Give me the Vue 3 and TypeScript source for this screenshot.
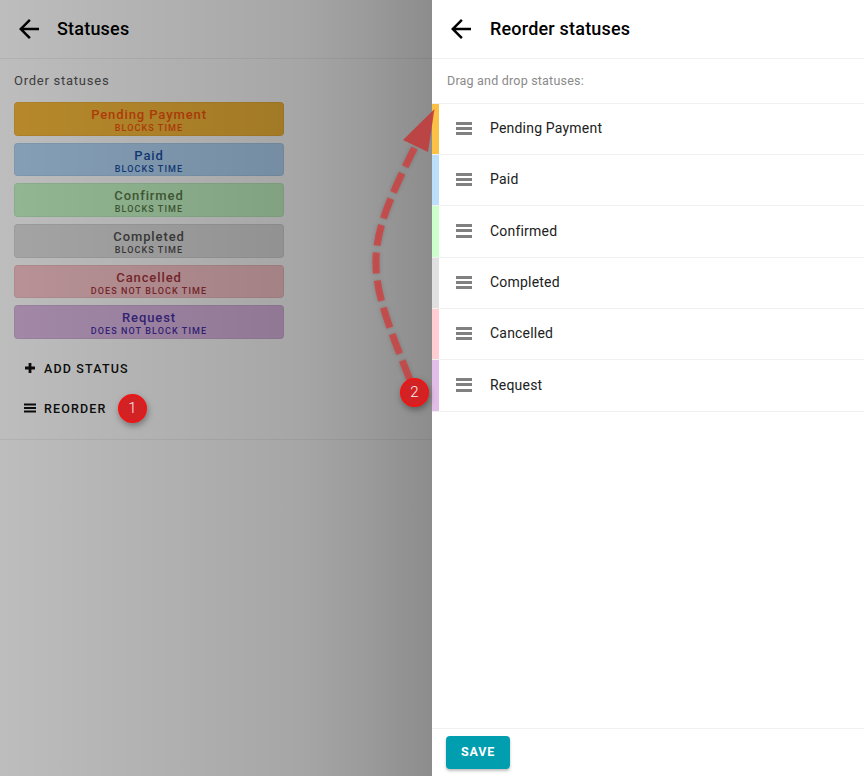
<script setup lang="ts">
interface Status { name: string; note: string; bg: string; fg: string; strip: string }
const statuses: Status[] = [
  { name: 'Pending Payment', note: 'BLOCKS TIME', bg: '#f7b93a', fg: '#f4540c', strip: '#fbc146' },
  { name: 'Paid', note: 'BLOCKS TIME', bg: '#b3d7f7', fg: '#1a50a5', strip: '#bbdefb' },
  { name: 'Confirmed', note: 'BLOCKS TIME', bg: '#c5f7c5', fg: '#587a48', strip: '#ccffcc' },
  { name: 'Completed', note: 'BLOCKS TIME', bg: '#dedede', fg: '#505050', strip: '#e0e0e0' },
  { name: 'Cancelled', note: 'DOES NOT BLOCK TIME', bg: '#f9c5ca', fg: '#a5343c', strip: '#ffcdd2' },
  { name: 'Request', note: 'DOES NOT BLOCK TIME', bg: '#dcb8e3', fg: '#4a30a5', strip: '#e1bee7' },
]
</script>

<template>
  <div class="screen">
    <section class="page">
      <header class="bar">
        <svg class="back" viewBox="0 0 24 24"><path d="M20 11H7.83l5.59-5.59L12 4l-8 8 8 8 1.41-1.41L7.83 13H20z" /></svg>
        <h1>Statuses</h1>
      </header>
      <div class="content">
        <p class="label">Order statuses</p>
        <ul class="chips">
          <li v-for="s in statuses" :key="s.name" class="chip" :style="{ background: s.bg, color: s.fg }">
            <span class="chip-name">{{ s.name }}</span>
            <span class="chip-note">{{ s.note }}</span>
          </li>
        </ul>
        <div class="action">
          <svg viewBox="0 0 12 12"><path d="M4.6 1h2.8v3.6H11v2.8H7.4V11H4.6V7.4H1V4.6h3.6z" /></svg>
          <span>ADD STATUS</span>
        </div>
        <div class="action">
          <svg viewBox="0 0 12 12"><path d="M0 1.6h12v1.9H0zM0 5.05h12v1.9H0zM0 8.5h12v1.9H0z" /></svg>
          <span>REORDER</span>
        </div>
      </div>
    </section>

    <div class="scrim"></div>

    <aside class="panel">
      <header class="bar">
        <svg class="back" viewBox="0 0 24 24"><path d="M20 11H7.83l5.59-5.59L12 4l-8 8 8 8 1.41-1.41L7.83 13H20z" /></svg>
        <h1 class="panel-title">Reorder statuses</h1>
      </header>
      <p class="hint">Drag and drop statuses:</p>
      <ul class="rows">
        <li v-for="s in statuses" :key="s.name" class="row">
          <i class="strip" :style="{ background: s.strip }"></i>
          <span class="handle"><b></b><b></b><b></b></span>
          <span class="row-name">{{ s.name }}</span>
        </li>
      </ul>
      <footer class="foot">
        <button class="save" type="button">SAVE</button>
      </footer>
    </aside>

    <svg class="arrow" width="864" height="776" viewBox="0 0 864 776">
      <path class="shaft" d="M410 380 C366 270 361.5 253 415 147" />
      <polygon points="434.5,109 403,140 428,152" fill="#c03c3c" fill-opacity=".9" />
    </svg>
    <span class="badge badge-one">1</span>
    <span class="badge badge-two">2</span>
  </div>
</template>

<style>
html, body { margin: 0; background: #fff; }
</style>

<style scoped>
.screen {
  position: relative;
  width: 864px;
  height: 776px;
  overflow: hidden;
  font-family: Roboto, "Liberation Sans", sans-serif;
  background: #fff;
}
.page { width: 432px; }
.bar {
  display: flex;
  align-items: center;
  height: 58px;
  padding-left: 14px;
  border-bottom: 1px solid #f0f0f0;
}
.back { width: 30px; height: 30px; margin-right: 13px; flex: none; }
.back path { fill: #000; }
h1 { margin: 0 0 2px; font-size: 18px; font-weight: 500; color: #000; letter-spacing: .2px; }
.panel-title { margin-left: 1px; }
.content {
  padding: 14px 148px 0 14px;
  height: 381px;
  box-sizing: border-box;
  border-bottom: 1px solid #f0f0f0;
}
.label { margin: 0 0 13px; font-size: 13px; line-height: 16px; letter-spacing: .75px; color: #555; }
.chips { list-style: none; margin: 0; padding: 0; display: flex; flex-direction: column; gap: 7px; }
.chip {
  height: 33.7px;
  box-sizing: border-box;
  border-radius: 4px;
  border: 1px solid rgba(0, 0, 0, .05);
  display: flex;
  flex-direction: column;
  align-items: center;
  padding-top: 4px;
}
.chip-name { font-size: 13px; line-height: 15px; font-weight: 500; letter-spacing: .9px; }
.chip-note { font-size: 9px; line-height: 12px; font-weight: 500; letter-spacing: 1.08px; }
.action {
  display: flex;
  align-items: center;
  gap: 8px;
  height: 40px;
  padding-left: 10px;
  font-size: 12.5px;
  font-weight: 500;
  letter-spacing: 1.15px;
  color: #111;
}
.chips + .action { margin-top: 9px; }
.action svg { width: 12px; height: 12px; fill: #111; }
.scrim {
  position: absolute;
  inset: 0;
  background: linear-gradient(90deg, rgba(0, 0, 0, .26) 0, rgba(0, 0, 0, .35) 300px, rgba(0, 0, 0, .39) 360px, rgba(0, 0, 0, .45) 432px);
}
.panel {
  position: absolute;
  top: 0;
  right: 0;
  bottom: 0;
  width: 432px;
  display: flex;
  flex-direction: column;
  background: #fff;
}
.hint {
  margin: 0;
  height: 44.6px;
  box-sizing: border-box;
  padding: 14px 0 0 15px;
  font-size: 12.5px;
  line-height: 16px;
  letter-spacing: .2px;
  color: #8a8a8a;
  border-bottom: 1px solid #f0f0f0;
}
.rows { list-style: none; margin: 0; padding: 0; flex: 1; }
.row {
  display: flex;
  align-items: center;
  height: 51.33px;
  box-sizing: border-box;
  border-bottom: 1px solid #f0f0f0;
}
.strip { width: 7px; align-self: stretch; flex: none; }
.handle {
  display: flex;
  flex-direction: column;
  gap: 2.2px;
  width: 16px;
  margin: 0 18px 1px 17px;
}
.handle b { display: block; height: 3px; background: #808080; }
.row-name { font-size: 14px; letter-spacing: .2px; color: #212121; padding-bottom: 1.4px; }
.foot {
  height: 48px;
  box-sizing: border-box;
  border-top: 1px solid #f0f0f0;
  padding: 7px 14px;
}
.save {
  display: block;
  width: 64px;
  height: 33px;
  padding: 0 0 2px;
  border: 0;
  border-radius: 4px;
  background: #009eaf;
  color: #fff;
  font: 700 12.5px Roboto, "Liberation Sans", sans-serif;
  letter-spacing: .8px;
  box-shadow: 0 2px 3px rgba(0, 0, 0, .25);
}
.arrow { position: absolute; top: 0; left: 0; pointer-events: none; }
.shaft {
  fill: none;
  stroke: #d0403f;
  stroke-opacity: .8;
  stroke-width: 7;
  stroke-dasharray: 21 7;
  filter: drop-shadow(0 0 2px rgba(0, 0, 0, .2));
}
.badge {
  position: absolute;
  width: 29px;
  height: 29px;
  box-sizing: border-box;
  border: 2px solid #ee1515;
  border-radius: 50%;
  background: #d32224;
  color: #f4f4f4;
  font-size: 15px;
  font-weight: 300;
  line-height: 25px;
  text-align: center;
  box-shadow: 1px 3px 6px rgba(0, 0, 0, .35);
}
.badge-one { left: 118px; top: 394px; }
.badge-two { left: 400px; top: 378px; }
</style>
